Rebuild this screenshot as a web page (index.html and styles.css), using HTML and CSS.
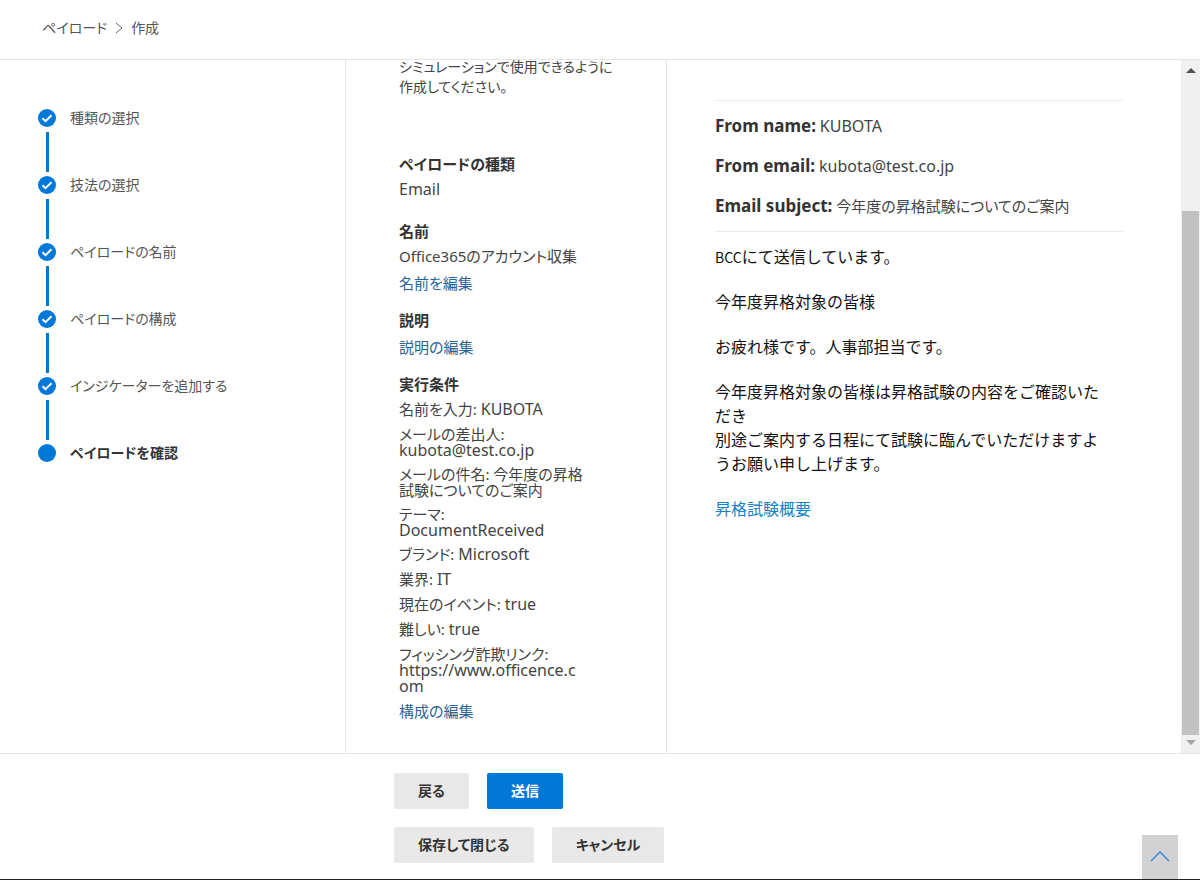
FILE: index.html
```html
<!DOCTYPE html>
<html lang="ja">
<head>
    <meta charset="UTF-8">
    <meta name="viewport" content="width=device-width, initial-scale=1.0">
    <title>ペイロード - 作成</title>
    <link rel="stylesheet" href="styles.css">
</head>
<body>
    <header class="header">
        <nav class="breadcrumb">
            <a href="#">ペイロード</a>
            <svg class="chevron" viewBox="0 0 8 12" width="8" height="12"><path d="M1 1l6 5-6 5" fill="none" stroke="#666" stroke-width="1"/></svg>
            <span>作成</span>
        </nav>
    </header>

    <main class="wizard">
        <aside class="steps-panel">
            <ol class="steps">
                <li class="step">
                    <svg class="marker" viewBox="0 0 18 18"><circle cx="9" cy="9" r="9"/><path d="M4.5 9.2l3 3 6-6"/></svg>
                    <span>種類の選択</span>
                </li>
                <li class="step">
                    <svg class="marker" viewBox="0 0 18 18"><circle cx="9" cy="9" r="9"/><path d="M4.5 9.2l3 3 6-6"/></svg>
                    <span>技法の選択</span>
                </li>
                <li class="step">
                    <svg class="marker" viewBox="0 0 18 18"><circle cx="9" cy="9" r="9"/><path d="M4.5 9.2l3 3 6-6"/></svg>
                    <span>ペイロードの名前</span>
                </li>
                <li class="step">
                    <svg class="marker" viewBox="0 0 18 18"><circle cx="9" cy="9" r="9"/><path d="M4.5 9.2l3 3 6-6"/></svg>
                    <span>ペイロードの構成</span>
                </li>
                <li class="step">
                    <svg class="marker" viewBox="0 0 18 18"><circle cx="9" cy="9" r="9"/><path d="M4.5 9.2l3 3 6-6"/></svg>
                    <span>インジケーターを追加する</span>
                </li>
                <li class="step current">
                    <svg class="marker" viewBox="0 0 18 18"><circle cx="9" cy="9" r="9"/></svg>
                    <span>ペイロードを確認</span>
                </li>
            </ol>
        </aside>

        <section class="summary">
            <p class="description">シミュレーションで使用できるように<br>作成してください。</p>

            <div class="group group-wide">
                <h3>ペイロードの種類</h3>
                <p><span class="en">Email</span></p>
            </div>
            <div class="group">
                <h3>名前</h3>
                <p>Office365のアカウント収集</p>
                <a href="#">名前を編集</a>
            </div>
            <div class="group">
                <h3>説明</h3>
                <a href="#">説明の編集</a>
            </div>
            <div class="group">
                <h3>実行条件</h3>
                <ul class="conditions">
                    <li>名前を入力: <span class="en">KUBOTA</span></li>
                    <li>メールの差出人:<br><span class="en">kubota@test.co.jp</span></li>
                    <li>メールの件名: 今年度の昇格<br>試験についてのご案内</li>
                    <li>テーマ:<br><span class="en">DocumentReceived</span></li>
                    <li>ブランド: <span class="en">Microsoft</span></li>
                    <li>業界: <span class="en">IT</span></li>
                    <li>現在のイベント: <span class="en">true</span></li>
                    <li>難しい: <span class="en">true</span></li>
                    <li>フィッシング詐欺リンク:<br><span class="en">https://www.officence.c<br>om</span></li>
                </ul>
                <a href="#">構成の編集</a>
            </div>
        </section>

        <section class="preview">
            <div class="mail-head">
                <p><b>From name:</b> <span class="en">KUBOTA</span></p>
                <p><b>From email:</b> <span class="en">kubota@test.co.jp</span></p>
                <p><b>Email subject:</b> 今年度の昇格試験についてのご案内</p>
            </div>
            <div class="mail-body">
                <p><span class="latin">BCC</span>にて送信しています。</p>
                <p>今年度昇格対象の皆様</p>
                <p>お疲れ様です。人事部担当です。</p>
                <p>今年度昇格対象の皆様は昇格試験の内容をご確認いただき<br>別途ご案内する日程にて試験に臨んでいただけますようお願い申し上げます。</p>
                <p><a href="#">昇格試験概要</a></p>
            </div>
        </section>

        <div class="scrollbar">
            <svg viewBox="0 0 10 5" width="10" height="5"><path d="M0 5l5-5 5 5z" fill="#505050"/></svg>
            <div class="thumb"></div>
            <svg viewBox="0 0 10 5" width="10" height="5"><path d="M0 0l5 5 5-5z" fill="#a3a3a3"/></svg>
        </div>
    </main>

    <footer class="footer">
        <div class="button-row">
            <button type="button" class="btn">戻る</button>
            <button type="button" class="btn btn-primary">送信</button>
        </div>
        <div class="button-row">
            <button type="button" class="btn">保存して閉じる</button>
            <button type="button" class="btn">キャンセル</button>
        </div>
        <button type="button" class="to-top" aria-label="上へ">
            <svg viewBox="0 0 20 11" width="20" height="11"><path d="M1 10l9-9 9 9" fill="none" stroke="#2b88d8" stroke-width="1.4"/></svg>
        </button>
    </footer>
</body>
</html>
```
FILE: styles.css
```css
* {
    box-sizing: border-box;
}

body {
    margin: 0;
    height: 100vh;
    display: flex;
    flex-direction: column;
    font-family: "Noto Sans", "Noto Sans CJK JP", sans-serif;
    font-size: 15px;
    font-feature-settings: "palt";
    line-height: 20px;
    color: #444;
    background-color: #fff;
}

p, h3, ul, ol {
    margin: 0;
    padding: 0;
    list-style: none;
}

a {
    color: #2a6496;
    text-decoration: none;
}

/* latin text runs a size larger than the kana around it */
.en {
    font-size: 16px;
    line-height: 14px;
}

.conditions .en {
    line-height: inherit;
}

.header {
    height: 60px;
    flex-shrink: 0;
    padding: 18px 42px;
    border-bottom: 1px solid #e5e5e5;
}

.breadcrumb {
    display: flex;
    align-items: center;
    gap: 8px;
    font-size: 14px;
    color: #555;
}

.breadcrumb a {
    color: inherit;
}

.wizard {
    flex: 1;
    min-height: 0;
    display: flex;
    overflow: hidden;
}

/* left: wizard steps */
.steps-panel {
    width: 346px;
    flex-shrink: 0;
    padding: 49px 38px;
    border-right: 1px solid #e5e5e5;
}

.step {
    display: grid;
    grid-template-columns: 18px 1fr;
    column-gap: 14px;
    line-height: 18px;
    font-size: 14px;
    color: #555;
}

.step:not(.current)::after {
    content: "";
    width: 3px;
    height: 40px;
    margin: 5px auto 4px;
    background-color: #0078d4;
}

.step.current {
    font-weight: 600;
    color: #333;
}

.marker {
    width: 18px;
    height: 18px;
}

.marker circle {
    fill: #0078d7;
}

.marker path {
    fill: none;
    stroke: #fff;
    stroke-width: 2;
}

/* middle: payload summary */
.summary {
    width: 321px;
    flex-shrink: 0;
    padding: 0 53px;
    border-right: 1px solid #e5e5e5;
    white-space: nowrap;
}

.description {
    margin: -3px 0 57px;
    font-size: 14px;
}

.group {
    display: flex;
    flex-direction: column;
    align-items: flex-start;
    gap: 7px;
    margin-bottom: 17px;
}

.group-wide {
    margin-bottom: 22px;
}

.group h3 {
    font-size: 15px;
    font-weight: 700;
    color: #333;
}

.group p {
    line-height: 16px;
    margin-bottom: 2px;
}

.conditions {
    display: flex;
    flex-direction: column;
    gap: 8px;
    line-height: 16px;
}

.conditions li {
    min-height: 17px;
}

/* right: mail preview */
.preview {
    flex: 1;
    padding: 40px 58px 0 48px;
}

.mail-head {
    display: flex;
    flex-direction: column;
    gap: 20px;
    padding: 15px 0;
    border-top: 1px solid #eaeaea;
    border-bottom: 1px solid #eaeaea;
}

.mail-head b {
    font-size: 17px;
    color: #333;
}

.mail-body {
    display: flex;
    flex-direction: column;
    gap: 21px;
    padding: 13px 12px 0 0;
    font-size: 16px;
    font-feature-settings: normal;
    line-height: 24px;
    color: #111;
}

.mail-body a {
    color: #1681c4;
}

.latin {
    font-family: "Noto Sans CJK JP", sans-serif;
    font-size: 14px;
}

.scrollbar {
    width: 19px;
    flex-shrink: 0;
    display: flex;
    flex-direction: column;
    align-items: center;
    padding: 8px 1px;
    background-color: #f0f0f0;
}

.thumb {
    flex: 1;
    align-self: stretch;
    margin: 138px 0 5px;
    background-color: #c1c1c1;
}

.footer {
    position: relative;
    flex-shrink: 0;
    display: flex;
    flex-direction: column;
    gap: 18px;
    padding: 19px 0 16px 394px;
    border-top: 1px solid #e5e5e5;
    border-bottom: 1px solid #222;
}

.button-row {
    display: flex;
    gap: 18px;
}

.btn {
    height: 36px;
    padding: 0 24px;
    border: none;
    border-radius: 2px;
    background-color: #e8e8e8;
    color: #333;
    font: inherit;
    font-size: 14px;
    font-weight: 600;
    font-feature-settings: inherit;
    cursor: pointer;
}

.btn-primary {
    background-color: #0078d7;
    color: #fff;
}

.to-top {
    position: absolute;
    right: 22px;
    bottom: 0;
    width: 36px;
    height: 44px;
    padding: 0;
    border: none;
    background-color: #d2d2d2;
}
```
